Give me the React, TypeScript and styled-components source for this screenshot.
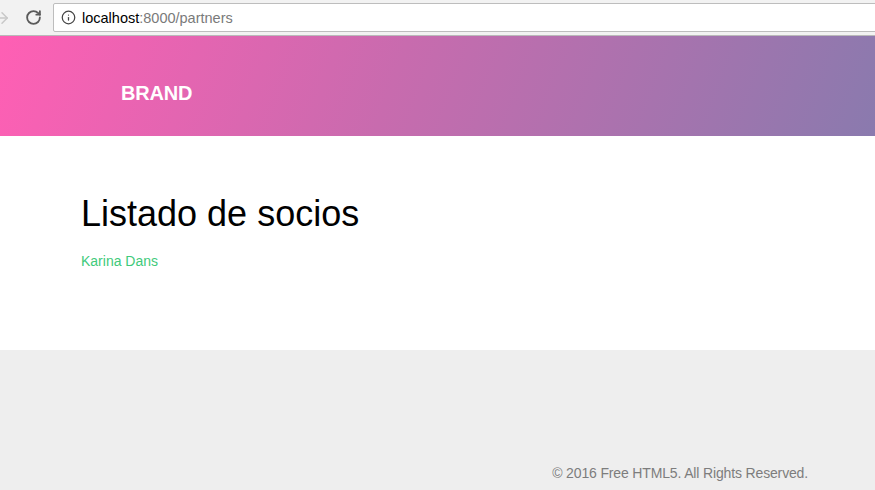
import React from "react";
import styled, { createGlobalStyle } from "styled-components";
import { ArrowRight, RotateCw, Info } from "lucide-react";

const Global = createGlobalStyle`
  html, body { margin: 0; padding: 0; background: #fff; }
  body { font-family: "Liberation Sans", Arial, sans-serif; }
  * { box-sizing: border-box; }
`;

const Page = styled.div`
  width: 875px;
  height: 490px;
  display: flex;
  flex-direction: column;
  overflow: hidden;
`;

const Chrome = styled.div`
  height: 36px;
  flex: none;
  display: flex;
  align-items: center;
  background: #f2f2f2;
  border-bottom: 1px solid #b9b9b9;
`;

const NavButton = styled.div<{ $dim?: boolean; $w: number }>`
  width: ${(p) => p.$w}px;
  height: 35px;
  display: flex;
  align-items: center;
  justify-content: center;
  overflow: hidden;
  color: ${(p) => (p.$dim ? "#c8c8c8" : "#5a5a5a")};
  flex: none;
`;

const Omnibox = styled.div`
  flex: 1;
  height: 29px;
  margin-right: -4px;
  background: #fff;
  border: 1px solid #bdbdbd;
  border-radius: 2px;
  display: flex;
  align-items: center;
  padding-left: 7px;
  gap: 6px;
  font-size: 14.5px;
  color: #000;
`;

const Host = styled.span`
  color: #000;
`;

const Path = styled.span`
  color: #7a7a7a;
`;

const Header = styled.header`
  height: 100px;
  flex: none;
  background: linear-gradient(110deg, #ff5fb4 0%, #c86bae 45%, #8a7aae 100%);
  padding: 45px 0 0 121px;
`;

const Brand = styled.div`
  color: #fff;
  font-weight: 700;
  font-size: 20px;
  line-height: 24px;
  letter-spacing: -0.2px;
`;

const Main = styled.main`
  height: 214px;
  flex: none;
  padding: 58px 81px 0;
  background: #fff;
`;

const Title = styled.h1`
  margin: 0;
  font-weight: 400;
  font-size: 36px;
  line-height: 40px;
  color: #000;
`;

const PartnerLink = styled.a`
  display: block;
  margin-top: 17px;
  font-size: 14px;
  line-height: 20px;
  color: #3fca7b;
  text-decoration: none;
`;

const Footer = styled.footer`
  flex: 1;
  background: #eeeeee;
  padding: 113px 67px 0 0;
  display: flex;
  justify-content: flex-end;
`;

const Copy = styled.p`
  margin: 0;
  font-size: 14px;
  line-height: 20px;
  color: #7d7d7d;
  letter-spacing: -0.15px;
`;

export default function App() {
  return (
    <Page>
      <Global />
      <Chrome>
        <NavButton $dim $w={13}>
          <ArrowRight size={18} strokeWidth={2} style={{ marginLeft: -10, flex: "none" }} />
        </NavButton>
        <NavButton $w={40}>
          <RotateCw size={17} strokeWidth={2.6} />
        </NavButton>
        <Omnibox>
          <Info size={15} strokeWidth={2} color="#444" />
          <span>
            <Host>localhost</Host>
            <Path>:8000/partners</Path>
          </span>
        </Omnibox>
      </Chrome>
      <Header>
        <Brand>BRAND</Brand>
      </Header>
      <Main>
        <Title>Listado de socios</Title>
        <PartnerLink href="#">Karina Dans</PartnerLink>
      </Main>
      <Footer>
        <Copy>© 2016 Free HTML5. All Rights Reserved.</Copy>
      </Footer>
    </Page>
  );
}
